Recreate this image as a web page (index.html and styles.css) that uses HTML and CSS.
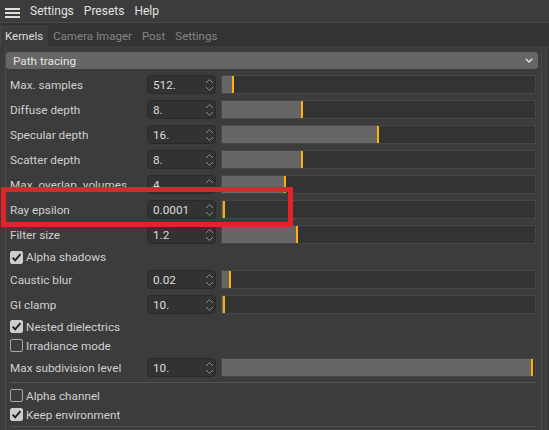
FILE: index.html
```html
<!DOCTYPE html>
<html>
<head>
<meta charset="utf-8">
<link rel="stylesheet" href="styles.css">
</head>
<body>
<div class="menubar">
  <div class="hamburger"><span></span><span></span><span></span></div>
  <span class="menu-item">Settings</span>
  <span class="menu-item">Presets</span>
  <span class="menu-item">Help</span>
</div>
<div class="tabs">
  <span class="tab active">Kernels</span>
  <span class="tab">Camera Imager</span>
  <span class="tab">Post</span>
  <span class="tab">Settings</span>
</div>
<div class="panel">
  <div class="group">
    <div class="dropdown">
      <span>Path tracing</span>
      <svg class="chev" width="8" height="5" viewBox="0 0 8 5"><polyline points="0.8,0.8 4,4 7.2,0.8" fill="none" stroke="#e8e8e8" stroke-width="1.3"/></svg>
    </div>
    <div class="rows">
      <div class="row"><span class="label">Max. samples</span><div class="num"><span>512.</span><svg class="spin" width="9" height="14" viewBox="0 0 9 14"><polyline points="1,5 4.5,1.5 8,5" fill="none" stroke="#8c8c8c" stroke-width="1"/><polyline points="1,9 4.5,12.5 8,9" fill="none" stroke="#8c8c8c" stroke-width="1"/></svg></div><div class="slider"><div class="fill" style="width:10px"></div></div></div>
      <div class="row"><span class="label">Diffuse depth</span><div class="num"><span>8.</span><svg class="spin" width="9" height="14" viewBox="0 0 9 14"><polyline points="1,5 4.5,1.5 8,5" fill="none" stroke="#8c8c8c" stroke-width="1"/><polyline points="1,9 4.5,12.5 8,9" fill="none" stroke="#8c8c8c" stroke-width="1"/></svg></div><div class="slider"><div class="fill" style="width:79px"></div></div></div>
      <div class="row"><span class="label">Specular depth</span><div class="num"><span>16.</span><svg class="spin" width="9" height="14" viewBox="0 0 9 14"><polyline points="1,5 4.5,1.5 8,5" fill="none" stroke="#8c8c8c" stroke-width="1"/><polyline points="1,9 4.5,12.5 8,9" fill="none" stroke="#8c8c8c" stroke-width="1"/></svg></div><div class="slider"><div class="fill" style="width:155px"></div></div></div>
      <div class="row"><span class="label">Scatter depth</span><div class="num"><span>8.</span><svg class="spin" width="9" height="14" viewBox="0 0 9 14"><polyline points="1,5 4.5,1.5 8,5" fill="none" stroke="#8c8c8c" stroke-width="1"/><polyline points="1,9 4.5,12.5 8,9" fill="none" stroke="#8c8c8c" stroke-width="1"/></svg></div><div class="slider"><div class="fill" style="width:79px"></div></div></div>
      <div class="row"><span class="label">Max. overlap. volumes</span><div class="num"><span>4.</span><svg class="spin" width="9" height="14" viewBox="0 0 9 14"><polyline points="1,5 4.5,1.5 8,5" fill="none" stroke="#8c8c8c" stroke-width="1"/><polyline points="1,9 4.5,12.5 8,9" fill="none" stroke="#8c8c8c" stroke-width="1"/></svg></div><div class="slider"><div class="fill" style="width:62px"></div></div></div>
      <div class="row"><span class="label">Ray epsilon</span><div class="num"><span>0.0001</span><svg class="spin" width="9" height="14" viewBox="0 0 9 14"><polyline points="1,5 4.5,1.5 8,5" fill="none" stroke="#8c8c8c" stroke-width="1"/><polyline points="1,9 4.5,12.5 8,9" fill="none" stroke="#8c8c8c" stroke-width="1"/></svg></div><div class="slider"><div class="fill" style="width:1px"></div></div></div>
      <div class="row"><span class="label">Filter size</span><div class="num"><span>1.2</span><svg class="spin" width="9" height="14" viewBox="0 0 9 14"><polyline points="1,5 4.5,1.5 8,5" fill="none" stroke="#8c8c8c" stroke-width="1"/><polyline points="1,9 4.5,12.5 8,9" fill="none" stroke="#8c8c8c" stroke-width="1"/></svg></div><div class="slider"><div class="fill" style="width:74px"></div></div></div>
      <div class="check tall"><span class="box on"><svg width="13" height="13" viewBox="0 0 13 13"><polyline points="2.6,6.6 5.2,9.4 10.4,3.2" fill="none" stroke="#1c1c1c" stroke-width="1.8"/></svg></span><span>Alpha shadows</span></div>
      <div class="row"><span class="label">Caustic blur</span><div class="num"><span>0.02</span><svg class="spin" width="9" height="14" viewBox="0 0 9 14"><polyline points="1,5 4.5,1.5 8,5" fill="none" stroke="#8c8c8c" stroke-width="1"/><polyline points="1,9 4.5,12.5 8,9" fill="none" stroke="#8c8c8c" stroke-width="1"/></svg></div><div class="slider"><div class="fill" style="width:7px"></div></div></div>
      <div class="row"><span class="label">GI clamp</span><div class="num"><span>10.</span><svg class="spin" width="9" height="14" viewBox="0 0 9 14"><polyline points="1,5 4.5,1.5 8,5" fill="none" stroke="#8c8c8c" stroke-width="1"/><polyline points="1,9 4.5,12.5 8,9" fill="none" stroke="#8c8c8c" stroke-width="1"/></svg></div><div class="slider"><div class="fill" style="width:1px"></div></div></div>
      <div class="check"><span class="box on"><svg width="13" height="13" viewBox="0 0 13 13"><polyline points="2.6,6.6 5.2,9.4 10.4,3.2" fill="none" stroke="#1c1c1c" stroke-width="1.8"/></svg></span><span>Nested dielectrics</span></div>
      <div class="check"><span class="box"></span><span>Irradiance mode</span></div>
      <div class="row"><span class="label">Max subdivision level</span><div class="num"><span>10.</span><svg class="spin" width="9" height="14" viewBox="0 0 9 14"><polyline points="1,5 4.5,1.5 8,5" fill="none" stroke="#8c8c8c" stroke-width="1"/><polyline points="1,9 4.5,12.5 8,9" fill="none" stroke="#8c8c8c" stroke-width="1"/></svg></div><div class="slider"><div class="fill" style="width:309px"></div></div></div>
      <div class="sep first"></div>
      <div class="check"><span class="box"></span><span>Alpha channel</span></div>
      <div class="check"><span class="box on"><svg width="13" height="13" viewBox="0 0 13 13"><polyline points="2.6,6.6 5.2,9.4 10.4,3.2" fill="none" stroke="#1c1c1c" stroke-width="1.8"/></svg></span><span>Keep environment</span></div>
      <div class="sep"></div>
    </div>
  </div>
</div>
<div class="highlight"></div>
</body>
</html>
```
FILE: styles.css
```css
html, body {
  margin: 0;
  padding: 0;
}
body {
  width: 549px;
  height: 430px;
  overflow: hidden;
  position: relative;
  background: #3c3c3c;
  font-family: Roboto, "Noto Sans", sans-serif;
  font-size: 11.75px;
  color: #d0d0d0;
}
.menubar {
  height: 22px;
  border-bottom: 1px solid #4a4a4a;
  display: flex;
  align-items: center;
  padding-left: 5px;
  color: #e2e2e2;
  gap: 10px;
  font-size: 12px;
}
.hamburger {
  width: 15px;
  height: 10px;
  margin-top: 4px;
  margin-right: 0;
  display: flex;
  flex-direction: column;
  justify-content: space-between;
}
.hamburger span {
  display: block;
  height: 2px;
  background: #dedede;
}
.menu-item {
  line-height: 22px;
}
.tabs {
  height: 23px;
  background: #333333;
  display: flex;
  align-items: flex-end;
  font-size: 11.5px;
}
.tab {
  height: 20px;
  line-height: 20px;
  padding: 0 5px;
  color: #858585;
}
.tab.active {
  background: #3c3c3c;
  color: #dedede;
  box-shadow: inset 1px 1px 0 #474747;
}
.panel {
  width: 546px;
  height: 384px;
  box-sizing: border-box;
  border-right: 1px solid #4a4a4a;
  padding-top: 1px;
}
.group {
  margin-left: 5px;
  width: 537px;
  height: 100%;
  box-sizing: border-box;
  border-left: 1px solid #4b4b4b;
  border-right: 1px solid #4b4b4b;
  padding-top: 5px;
}
.dropdown {
  height: 17px;
  margin-right: 3px;
  background: #666666;
  border-radius: 3px;
  display: flex;
  align-items: center;
  justify-content: space-between;
  padding: 0 5px 0 7px;
  color: #e4e4e4;
}
.chev {
  display: block;
}
.rows {
  padding: 3px 5px 0 4px;
}
.row {
  display: flex;
  align-items: center;
  height: 25px;
}
.label {
  width: 137px;
  flex: none;
  white-space: nowrap;
}
.num {
  width: 69px;
  height: 19px;
  flex: none;
  box-sizing: border-box;
  background: #323232;
  border: 1px solid #2a2a2a;
  border-radius: 4px;
  display: flex;
  align-items: center;
  justify-content: space-between;
  padding: 0 1px 0 5px;
  color: #dcdcdc;
}
.spin {
  display: block;
}
.slider {
  margin-left: 5px;
  flex: 1;
  height: 19px;
  box-sizing: border-box;
  border: 1px solid #474747;
  background: #333333;
  display: flex;
}
.fill {
  height: 100%;
  background: #666666;
  border-right: 2px solid #ffb000;
}
.check {
  display: flex;
  align-items: center;
  height: 19px;
}
.check.tall {
  height: 20px;
}
.box {
  width: 13px;
  height: 13px;
  box-sizing: border-box;
  border: 1px solid #a8a8a8;
  border-radius: 2px;
  margin-right: 3px;
  flex: none;
}
.box.on {
  background: #cdcdcd;
  border-color: #cdcdcd;
  position: relative;
}
.box.on svg {
  position: absolute;
  left: -1px;
  top: -1px;
}
.sep {
  height: 1px;
  background: #535353;
  margin-top: 2px;
}
.sep.first {
  margin-bottom: 3px;
}
.highlight {
  position: absolute;
  left: 1px;
  top: 187px;
  width: 292px;
  height: 40px;
  box-sizing: border-box;
  border: 5px solid #e3222b;
}
```
